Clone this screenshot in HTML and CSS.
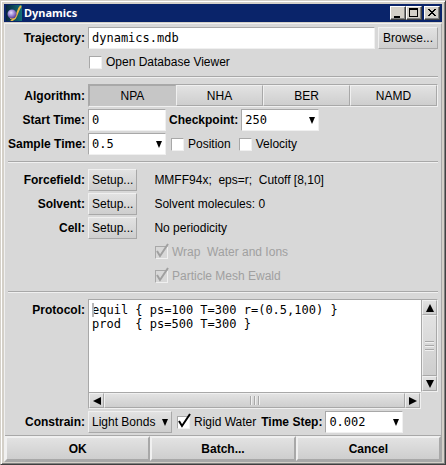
FILE: index.html
```html
<!DOCTYPE html>
<html lang="en">
<head>
<meta charset="utf-8">
<title>Dynamics</title>
<link rel="stylesheet" href="styles.css">
</head>
<body>
<main class="window">
  <header class="titlebar">
    <svg class="logo" viewBox="0 0 16 16" aria-hidden="true">
      <defs>
        <radialGradient id="ball" cx=".4" cy=".35" r=".65"><stop offset="0" stop-color="#e8e0ff"/><stop offset=".5" stop-color="#a08cd8"/><stop offset="1" stop-color="#5a3c98"/></radialGradient>
        <linearGradient id="sea" x2="1"><stop offset="0" stop-color="#06263c"/><stop offset="1" stop-color="#147078"/></linearGradient>
      </defs>
      <rect width="16" height="16" fill="url(#sea)"/>
      <path d="M15 1 C12 4 12 8 9 13 L5 16 M4 13 L9 13" fill="none" stroke="#e8b848" stroke-width="2"/>
      <circle cx="6" cy="9" r="4.5" fill="url(#ball)"/>
    </svg>
    <h1 class="title">Dynamics</h1>
    <div class="caption-buttons">
      <button class="caption" aria-label="Minimize"><svg viewBox="0 0 12 11"><path d="M2 8h6v2H2z"/></svg></button>
      <button class="caption" aria-label="Maximize"><svg viewBox="0 0 12 11"><path d="M1 0h9v9H1zM2 2v6h7V2z" fill-rule="evenodd"/></svg></button>
      <button class="caption caption-close" aria-label="Close"><svg viewBox="0 0 12 11"><path d="M2 1h2v1h1v1h2V2h1V1h2v1H9v1H8v1H7v1h1v1h1v1h1v1H8V7H7V6H5v1H4v1H2V7h1V6h1V5h1V4H4V3H3V2H2z"/></svg></button>
    </div>
  </header>

  <form class="panel">
    <section class="section">
      <div class="row">
        <label class="name" for="trajectory">Trajectory:</label>
        <input class="field grow" id="trajectory" type="text" value="dynamics.mdb">
        <button class="button browse" type="button">Browse...</button>
      </div>
      <div class="row">
        <span class="name"></span>
        <label class="check"><input type="checkbox">Open Database Viewer</label>
      </div>
    </section>

    <section class="section section-timing">
      <div class="row">
        <span class="name" id="algorithm">Algorithm:</span>
        <div class="segments" role="group" aria-labelledby="algorithm">
          <button class="segment segment-on" type="button" aria-pressed="true">NPA</button>
          <button class="segment" type="button" aria-pressed="false">NHA</button>
          <button class="segment" type="button" aria-pressed="false">BER</button>
          <button class="segment" type="button" aria-pressed="false">NAMD</button>
        </div>
      </div>
      <div class="row">
        <label class="name" for="start">Start Time:</label>
        <input class="field short" id="start" type="text" value="0">
        <label class="inner-name" for="checkpoint">Checkpoint:</label>
        <span class="combo short"><select class="field" id="checkpoint"><option>250</option></select><svg class="arrow" viewBox="0 0 6 7"><path d="M0 0h6L3 7z"/></svg></span>
      </div>
      <div class="row">
        <label class="name" for="sample">Sample Time:</label>
        <span class="combo short"><select class="field" id="sample"><option>0.5</option></select><svg class="arrow" viewBox="0 0 6 7"><path d="M0 0h6L3 7z"/></svg></span>
        <div class="checks">
          <label class="check"><input type="checkbox">Position</label>
          <label class="check"><input type="checkbox">Velocity</label>
        </div>
      </div>
    </section>

    <section class="section">
      <div class="row">
        <span class="name">Forcefield:</span>
        <button class="button" type="button">Setup...</button>
        <span class="info">MMFF94x;&nbsp; eps=r;&nbsp; Cutoff [8,10]</span>
      </div>
      <div class="row">
        <span class="name">Solvent:</span>
        <button class="button" type="button">Setup...</button>
        <span class="info">Solvent molecules: 0</span>
      </div>
      <div class="row">
        <span class="name">Cell:</span>
        <button class="button" type="button">Setup...</button>
        <span class="info">No periodicity</span>
      </div>
      <div class="row indented">
        <label class="check check-off"><input type="checkbox" checked disabled><svg class="tick" viewBox="0 0 14 14"><path d="M2 6l3 5L13 -1"/></svg>Wrap&nbsp; Water and Ions</label>
      </div>
      <div class="row indented">
        <label class="check check-off"><input type="checkbox" checked disabled><svg class="tick" viewBox="0 0 14 14"><path d="M2 6l3 5L13 -1"/></svg>Particle Mesh Ewald</label>
      </div>
    </section>

    <section class="section section-last">
      <div class="row row-tall">
        <label class="name" for="protocol">Protocol:</label>
        <div class="editor">
          <div class="editor-text">
            <textarea id="protocol" spellcheck="false" wrap="off">equil { ps=100 T=300 r=(0.5,100) }
prod  { ps=500 T=300 }</textarea>
            <span class="caret"></span>
          </div>
          <div class="scroll scroll-v">
            <button class="scroll-button" type="button" aria-label="Scroll up"><svg viewBox="0 0 8 8"><path d="M4 0l4 8H0z"/></svg></button>
            <div class="thumb"><i></i><i></i><i></i></div>
            <button class="scroll-button" type="button" aria-label="Scroll down"><svg viewBox="0 0 8 8"><path d="M0 0h8L4 8z"/></svg></button>
          </div>
          <div class="scroll scroll-h">
            <button class="scroll-button" type="button" aria-label="Scroll left"><svg viewBox="0 0 8 8"><path d="M8 0v8L0 4z"/></svg></button>
            <div class="thumb"><i></i><i></i><i></i></div>
            <button class="scroll-button" type="button" aria-label="Scroll right"><svg viewBox="0 0 8 8"><path d="M0 0l8 4-8 4z"/></svg></button>
          </div>
        </div>
      </div>
      <div class="row">
        <label class="name" for="constrain">Constrain:</label>
        <span class="combo menu"><select class="button" id="constrain"><option>Light Bonds</option></select><svg class="arrow" viewBox="0 0 6 7"><path d="M0 0h6L3 7z"/></svg></span>
        <div class="checks">
          <label class="check"><input type="checkbox" checked><svg class="tick" viewBox="0 0 14 14"><path d="M2 6l3 5L13 -1"/></svg>Rigid Water</label>
        </div>
        <label class="inner-name" for="step">Time Step:</label>
        <span class="combo short"><select class="field" id="step"><option>0.002</option></select><svg class="arrow" viewBox="0 0 6 7"><path d="M0 0h6L3 7z"/></svg></span>
      </div>
    </section>

    <footer class="actions">
      <button class="action" type="button">OK</button>
      <button class="action" type="button">Batch...</button>
      <button class="action" type="button">Cancel</button>
    </footer>
  </form>
</main>
</body>
</html>
```
FILE: styles.css
```css
* { box-sizing: border-box; }

body {
  margin: 0;
  font: 12px/16px "Liberation Sans", Arial, sans-serif;
  color: #000;
}

button, input, select, textarea { font: inherit; color: inherit; margin: 0; border-radius: 0; }
svg { display: block; }

.window {
  display: flex;
  flex-direction: column;
  min-height: 100vh;
  padding: 2px;
  background: #d4d0c8;
  border: 1px solid;
  border-color: #d4d0c8 #404040 #404040 #d4d0c8;
  box-shadow: inset 1px 1px #fff, inset -1px -1px #808080;
}

/* Title bar */
.titlebar {
  display: flex;
  align-items: center;
  height: 18px;
  margin: 1px;
  padding: 0 2px;
  background: #0a246a;
  color: #fff;
}
.logo { width: 16px; height: 16px; }
.title { flex: 1; margin: 0 2px; font: bold 11px/16px "Noto Sans", Tahoma, sans-serif; }
.caption-buttons { display: flex; }
.caption {
  width: 16px;
  height: 14px;
  padding: 1px;
  background: #d4d0c8;
  border: 1px solid;
  border-color: #fff #404040 #404040 #fff;
  box-shadow: inset -1px -1px #808080;
}
.caption svg { width: 12px; height: 11px; }
.caption-close { margin-left: 2px; }

/* Form */
.panel {
  flex: 1;
  display: flex;
  flex-direction: column;
  margin: 0 1px;
  background: #d8d8d8;
  border: 1px solid;
  border-color: #f0f0f0 #a8a8a8 #a8a8a8 #f0f0f0;
}
.section {
  display: flex;
  flex-direction: column;
  gap: 2px;
  margin: 0 3px;
  padding: 6px 0 5px;
  border-bottom: 1px solid #f0f0f0;
  box-shadow: inset 0 -1px #a8a8a8;
}
.section:first-child { padding: 3px 0 4px; }
.section-timing { padding-bottom: 7px; }
.section-last { flex: 1; padding-bottom: 2px; border: 0; box-shadow: none; }
.row { display: flex; align-items: center; gap: 3px; min-height: 22px; }
.row-tall { flex: 1; align-items: stretch; }
.name { flex: none; width: 77px; text-align: right; font-weight: bold; white-space: nowrap; }
.row-tall .name { padding-top: 3px; }
.inner-name { font-weight: bold; white-space: nowrap; }
.info { margin-left: 14px; }
.indented { padding-left: 146px; }

.field {
  height: 22px;
  min-width: 0;
  padding: 0 3px;
  background: #fff;
  border: 1px solid;
  border-color: #a8a8a8 #f0f0f0 #f0f0f0 #a8a8a8;
  font: 12px/16px "DejaVu Sans Mono", monospace;
}
.grow { flex: 1; }
.short { width: 78px; }

.combo { display: grid; align-items: center; }
.combo > * { grid-area: 1 / 1; }
.combo select { appearance: none; width: 100%; }
.arrow { justify-self: end; width: 6px; height: 7px; margin-right: 4px; pointer-events: none; }

.button, .segment, .scroll-button, .thumb, .action {
  background: linear-gradient(#e2e2e2, #cecece);
  border: 1px solid;
  border-color: #f0f0f0 #a8a8a8 #a8a8a8 #f0f0f0;
}
.button { height: 22px; min-width: 49px; padding: 0 3px; white-space: nowrap; }
.browse { min-width: 60px; }
.menu { width: 84px; }

.segments {
  flex: 1;
  display: grid;
  grid-template-columns: repeat(4, 1fr);
  border: 1px solid;
  border-color: #a8a8a8 #f0f0f0 #f0f0f0 #a8a8a8;
}
.segment { height: 21px; padding: 0; }
.segment-on { background: #c6c6c6; border-color: #a8a8a8 #c6c6c6 #c6c6c6 #a8a8a8; }

.checks { display: flex; gap: 8px; margin: 0 2px; }
.check { display: grid; grid-template-columns: 13px auto; align-items: center; column-gap: 4px; margin-left: 1px; white-space: nowrap; }
.checks .check { margin-left: 0; }
.check input {
  appearance: none;
  grid-area: 1 / 1;
  width: 13px;
  height: 13px;
  background: #fff;
  border: 1px solid;
  border-color: #a8a8a8 #f0f0f0 #f0f0f0 #a8a8a8;
}
.tick { grid-area: 1 / 1; width: 14px; height: 14px; overflow: visible; pointer-events: none; }
.tick path { fill: none; stroke: #000; stroke-width: 2; }
.check-off { color: #a0a0a0; }
.check-off input { background: #d8d8d8; }
.check-off .tick path { stroke: #a0a0a0; }

/* Protocol editor */
.editor { flex: 1; display: grid; grid-template: minmax(72px, 1fr) 17px / 1fr 17px; }
.editor-text { position: relative; display: grid; border: 1px solid #a8a8a8; border-width: 1px 0 0 1px; background: #fff; }
.editor textarea {
  resize: none;
  border: 0;
  padding: 3px;
  background: none;
  overflow: hidden;
  font: 12px/14px "DejaVu Sans Mono", monospace;
}
.caret { position: absolute; left: 3px; top: 3px; width: 2px; height: 14px; background: #b8b8b8; }
.scroll { display: flex; background: #c4c4c4; border: 1px solid; border-color: #a8a8a8 #f0f0f0 #f0f0f0 #a8a8a8; }
.scroll-v { flex-direction: column; }
.scroll-button { flex: none; display: grid; place-items: center; width: 15px; height: 15px; padding: 0; }
.scroll-button svg { width: 8px; height: 8px; }
.thumb { flex: 1; display: flex; align-items: center; justify-content: center; gap: 2px; }
.scroll-v .thumb { flex-direction: column; }
.thumb i { width: 2px; height: 9px; background: linear-gradient(to right, #a8a8a8 50%, #f0f0f0 50%); }
.scroll-v .thumb i { width: 9px; height: 2px; background: linear-gradient(#a8a8a8 50%, #f0f0f0 50%); }

/* Bottom buttons */
.actions { display: grid; grid-template-columns: repeat(3, 1fr); border-top: 1px solid #a8a8a8; }
.action { height: 25px; padding: 0; border-width: 2px; font-weight: bold; }
```
